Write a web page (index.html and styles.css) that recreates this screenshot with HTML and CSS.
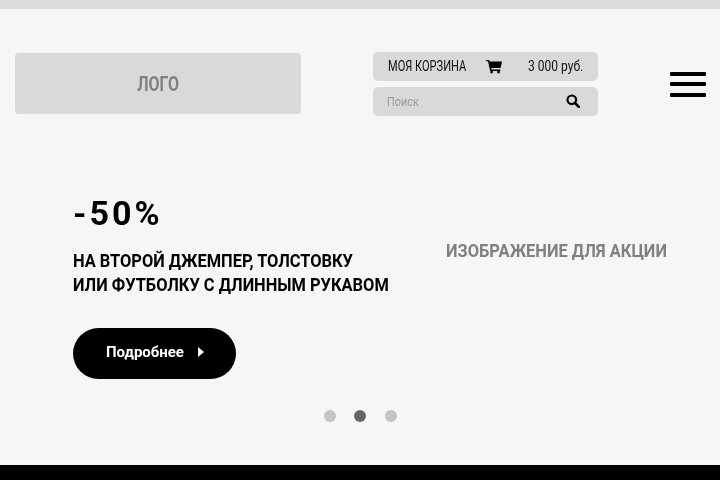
FILE: index.html
```html
<!DOCTYPE html>
<html lang="ru">
<head>
<meta charset="utf-8">
<title>Акция</title>
<link rel="stylesheet" href="styles.css">
</head>
<body>
<div class="page">
  <div class="topbar"></div>
  <header class="header">
    <div class="logo"><span class="logo-text">ЛОГО</span></div>
    <div class="tools">
      <div class="field cart">
        <span class="cart-label">МОЯ КОРЗИНА</span>
        <svg class="cart-icon" viewBox="0 0 16 14" width="16" height="15"><path d="M0 .4h3.2l.5 1.7H16l-1.5 6.5H5.3l.3 1.4h8.7v1.4H4.2L2 1.8H0z"/><circle cx="5.6" cy="12.6" r="1.4"/><circle cx="12.6" cy="12.6" r="1.4"/></svg>
        <span class="cart-sum">3 000 руб.</span>
      </div>
      <div class="field search">
        <span class="search-label">Поиск</span>
        <svg class="search-icon" viewBox="0 0 14 14" width="14" height="14"><circle cx="5.8" cy="5.8" r="4.3" fill="none" stroke="#000" stroke-width="2.2"/><path d="M8.8 8.8l4 4" stroke="#000" stroke-width="2.6" stroke-linecap="round"/></svg>
      </div>
    </div>
    <div class="burger"><span></span><span></span><span></span></div>
  </header>
  <main class="slide">
    <div class="promo">
      <div class="discount">-50%</div>
      <div class="promo-text">НА ВТОРОЙ ДЖЕМПЕР, ТОЛСТОВКУ<br>ИЛИ ФУТБОЛКУ С ДЛИННЫМ РУКАВОМ</div>
      <a class="more"><span class="more-text">Подробнее</span><i class="arrow"></i></a>
    </div>
    <div class="picture">ИЗОБРАЖЕНИЕ ДЛЯ АКЦИИ</div>
  </main>
  <div class="dots"><span class="dot"></span><span class="dot active"></span><span class="dot"></span></div>
  <footer class="footer"></footer>
</div>
</body>
</html>
```

FILE: styles.css
```css
* { box-sizing: border-box; }
html, body { margin: 0; padding: 0; }
body { font-family: "Roboto", "Liberation Sans", sans-serif; color: #000; }
.page { width: 720px; height: 480px; background: #f6f6f6; display: flex; flex-direction: column; overflow: hidden; white-space: nowrap; filter: blur(.35px); }
.topbar { height: 9px; background: #dcdcdc; flex: none; }
.header { display: flex; align-items: flex-start; padding: 43px 14px 0 15px; height: 107px; flex: none; }
.logo { width: 286px; height: 61px; margin-top: 1px; background: #d9d9d9; border-radius: 4px; display: flex; align-items: center; justify-content: center; color: #808080; }
.logo-text { font-size: 20px; font-weight: 700; transform: scaleX(.8); }
.tools { width: 225px; margin-left: 72px; display: flex; flex-direction: column; gap: 6.5px; }
.field { height: 28.5px; background: #d9d9d9; border-radius: 5px; display: flex; align-items: center; }
.cart { padding: 0 15px; font-size: 14px; color: #111; }
.cart-label { width: 98px; flex: none; transform: scaleX(.79); transform-origin: left center; }
.cart-icon { flex: none; }
.cart-sum { margin-left: auto; transform: scaleX(.86); transform-origin: right center; }
.search { padding: 0 18px 0 14px; justify-content: space-between; font-size: 13px; color: #9a9a9a; }
.search-label { transform: scaleX(.84); transform-origin: left center; }
.burger { margin-left: auto; margin-top: 20px; width: 36px; display: flex; flex-direction: column; gap: 6.3px; }
.burger span { height: 4px; border-radius: 1px; background: #000; }
.slide { display: flex; flex: 1; padding: 0 0 0 73px; }
.promo { padding-top: 76px; }
.discount { font-size: 34px; font-weight: 700; letter-spacing: 3px; line-height: 43px; }
.promo-text { margin-top: 14px; font-size: 18px; font-weight: 700; line-height: 24px; transform: scaleX(.912); transform-origin: left center; }
.more { margin-top: 31px; width: 163px; height: 51px; background: #000; border-radius: 26px; color: #fff; display: flex; align-items: center; padding: 0 0 4px 33px; }
.more-text { font-size: 15px; font-weight: 700; width: 78px; flex: none; }
.arrow { width: 0; height: 0; margin-left: 14px; border-left: 6px solid #fff; border-top: 5px solid transparent; border-bottom: 5px solid transparent; }
.picture { margin-left: 27px; padding-top: 123px; font-size: 19px; font-weight: 700; color: #808080; transform: scaleX(.866); transform-origin: left top; }
.dots { display: flex; justify-content: center; gap: 18.5px; height: 55px; flex: none; }
.dot { width: 12px; height: 12px; border-radius: 50%; background: #c4c4c4; }
.dot.active { background: #666; }
.footer { height: 15px; background: #000; flex: none; }
```
